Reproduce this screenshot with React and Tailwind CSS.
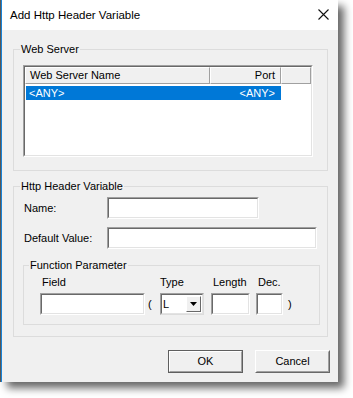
import React from 'react';

const font = { fontFamily: '"Liberation Sans", Arial, sans-serif' };

function Edit({ className }) {
  return (
    <div className={`border border-t-[#a0a0a0] border-l-[#a0a0a0] border-b-white border-r-white ${className}`}>
      <div className="h-full w-full bg-white border border-t-[#696969] border-l-[#696969] border-b-[#e3e3e3] border-r-[#e3e3e3]" />
    </div>
  );
}

function HeaderCell({ className, children }) {
  return (
    <div className={`h-[17px] flex items-center border-t border-l border-t-white border-l-white border-b border-r border-b-[#a0a0a0] border-r-[#a0a0a0] bg-[#f0f0f0] ${className}`}>
      {children}
    </div>
  );
}

function App() {
  return (
    <div className="w-[353px] h-[398px] bg-white text-[11px] text-black" style={font}>
      <div className="flex">
        <div className="w-px h-[382px] bg-[#5a5a5a]" />
        <div className="w-[337px] h-[382px] flex flex-col border-l border-[#1883d7] shadow-[6px_6px_8px_rgba(0,0,0,0.6)]">
          {/* title bar */}
          <div className="h-[30px] bg-white flex items-center justify-between pl-[8px] pr-[9px]">
            <span className="text-[11.5px] pt-[2px]">Add Http Header Variable</span>
            <svg width="11" height="11" viewBox="0 0 11 11" className="mt-[-1px]">
              <path d="M0.5 0.5 L10.5 10.5 M10.5 0.5 L0.5 10.5" stroke="#111" strokeWidth="1.1" />
            </svg>
          </div>

          {/* body */}
          <div className="flex-1 bg-[#f0f0f0] pt-[13px] pl-[11px]">
            <fieldset className="w-[315px] border border-[#dcdcdc]">
              <legend className="ml-[6px] px-[1px] leading-[13px]">Web Server</legend>
              <div className="pl-[9px] pt-[9px] pb-[13px]">
                <div className="w-[290px] h-[92px] border border-t-[#a0a0a0] border-l-[#a0a0a0] border-b-white border-r-white">
                  <div className="h-full w-full bg-white border border-t-[#696969] border-l-[#696969] border-b-[#e3e3e3] border-r-[#e3e3e3]">
                    <div className="flex">
                      <HeaderCell className="w-[185px] pl-[4px]">Web Server Name</HeaderCell>
                      <HeaderCell className="w-[71px] justify-end pr-[5px]">Port</HeaderCell>
                      <HeaderCell className="flex-1" />
                    </div>
                    <div className="mt-[2px] ml-[1px] w-[255px] h-[14px] bg-[#0078d7] text-white flex items-center justify-between pl-[3px] pr-[6px]">
                      <span>&lt;ANY&gt;</span>
                      <span>&lt;ANY&gt;</span>
                    </div>
                  </div>
                </div>
              </div>
            </fieldset>

            <fieldset className="mt-[9px] w-[315px] border border-[#dcdcdc]">
              <legend className="ml-[6px] px-[1px] leading-[13px]">Http Header Variable</legend>
              <div className="pb-[11px]">
                <div className="pl-[10px] mt-[4px] flex items-center">
                  <span className="w-[83px]">Name:</span>
                  <Edit className="w-[152px] h-[22px]" />
                </div>
                <div className="pl-[10px] mt-[8px] flex items-center">
                  <span className="w-[83px]">Default Value:</span>
                  <Edit className="w-[210px] h-[22px]" />
                </div>

                <fieldset className="mt-[10px] ml-[9px] w-[297px] border border-[#dcdcdc]">
                  <legend className="ml-[5px] px-[1px] leading-[13px]">Function Parameter</legend>
                  <div className="pl-[16px] pt-[4px] pb-[9px] grid grid-cols-[105px_15px_44px_7px_39px_6px_27px_20px] grid-rows-[13px_22px] gap-y-[4px] leading-[13px]">
                    <span className="pl-[2px]">Field</span>
                    <span />
                    <span>Type</span>
                    <span />
                    <span className="pl-[2px]">Length</span>
                    <span />
                    <span className="pl-[2px]">Dec.</span>
                    <span />

                    <Edit className="h-[22px]" />
                    <span className="pl-[3px] self-center">(</span>
                    <div className="h-[22px] border border-t-[#a0a0a0] border-l-[#a0a0a0] border-b-[#dcdcdc] border-r-[#dcdcdc]">
                      <div className="h-full bg-white border border-t-[#696969] border-l-[#696969] border-b-[#e3e3e3] border-r-[#e3e3e3] flex items-center justify-between pl-[1px] pr-px">
                        <span>L</span>
                        <div className="w-[15px] h-[16px] bg-[#f0f0f0] border border-t-white border-l-white border-b-[#696969] border-r-[#696969] flex items-center justify-center">
                          <svg width="7" height="4" viewBox="0 0 7 4">
                            <path d="M0 0 H7 L3.5 4 Z" fill="#000" />
                          </svg>
                        </div>
                      </div>
                    </div>
                    <span />
                    <Edit className="h-[22px]" />
                    <span />
                    <Edit className="h-[22px]" />
                    <span className="pl-[5px] self-center">)</span>
                  </div>
                </fieldset>
              </div>
            </fieldset>

            <div className="mt-[13px] w-[317px] flex justify-end gap-[12px]">
              <button className="w-[75px] h-[23px] border border-[#5f5f5f] bg-[#f0f0f0]">
                <div className="h-full w-full flex items-center justify-center border border-t-white border-l-white border-b-[#a0a0a0] border-r-[#a0a0a0]">
                  OK
                </div>
              </button>
              <button className="w-[75px] h-[23px] border border-t-white border-l-white border-b-[#696969] border-r-[#696969] bg-[#f0f0f0]">
                <div className="h-full w-full flex items-center justify-center border border-t-[#f0f0f0] border-l-[#f0f0f0] border-b-[#a0a0a0] border-r-[#a0a0a0]">
                  Cancel
                </div>
              </button>
            </div>
          </div>
        </div>
      </div>
    </div>
  );
}

export default App;
